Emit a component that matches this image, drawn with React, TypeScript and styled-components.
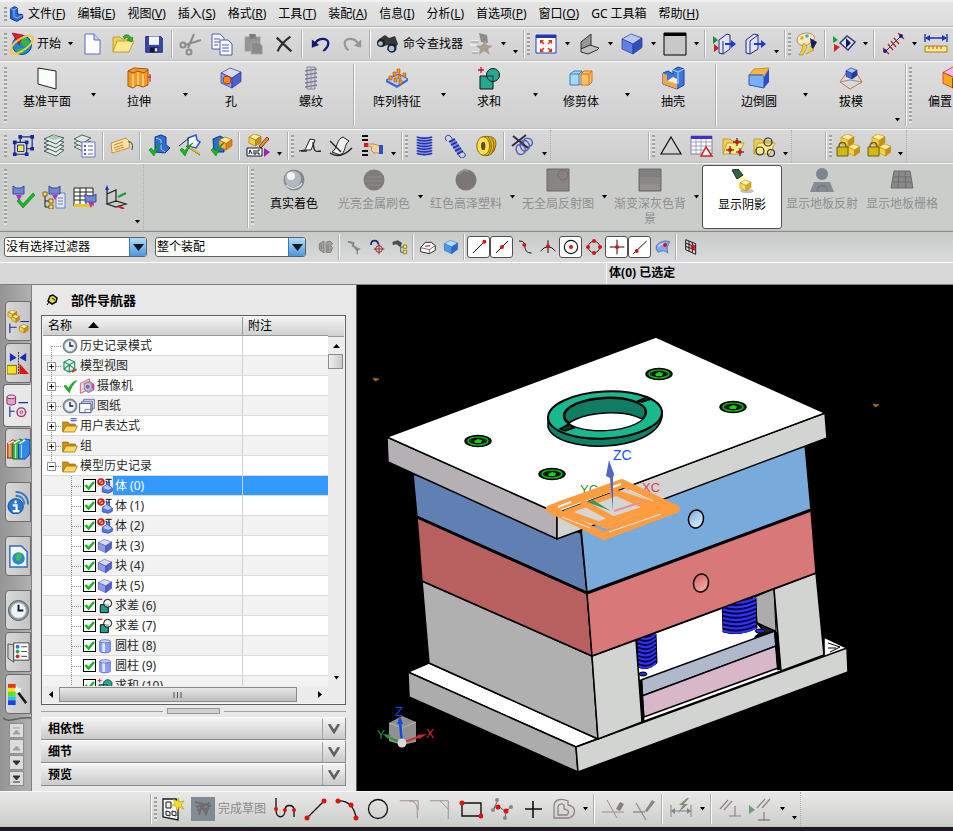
import React, { ReactNode } from "react";
import styled, { createGlobalStyle, css } from "styled-components";

const Global = createGlobalStyle`
  * { box-sizing: border-box; }
  body { margin: 0; }
  body, button, input, select, table {
    font-family: "Noto Sans", "Noto Sans CJK SC", sans-serif;
    font-size: 12px;
    line-height: 16px;
    color: #000;
  }
  button { border: 0; padding: 0; background: none; }
  svg { display: block; flex: none; }
`;

/* ---------- icon building blocks ---------- */

const BLUE: [string, string, string] = ["#c8d4ff", "#4f78e8", "#2340b8"];
const GOLD: [string, string, string] = ["#fff0a0", "#f8d040", "#c89010"];
const ORANGE: [string, string, string] = ["#ffd890", "#f8a030", "#c86808"];
const LILAC: [string, string, string] = ["#d8dcff", "#9098f8", "#5060d0"];

function Cube({ x = 2, y = 2, s = 20, c = BLUE, line = "#2a3a90" }: {
  x?: number; y?: number; s?: number; c?: [string, string, string]; line?: string;
}) {
  const q = s / 4;
  return (
    <g stroke={line} strokeWidth="0.7" strokeLinejoin="round">
      <path d={`M${x} ${y + q}L${x + s * 0.45} ${y}L${x + s} ${y + q * 0.8}L${x + s * 0.55} ${y + q * 2}Z`} fill={c[0]} />
      <path d={`M${x} ${y + q}L${x + s * 0.55} ${y + q * 2}V${y + s}L${x} ${y + s - q}Z`} fill={c[1]} />
      <path d={`M${x + s * 0.55} ${y + q * 2}L${x + s} ${y + q * 0.8}V${y + s - q * 1.3}L${x + s * 0.55} ${y + s}Z`} fill={c[2]} />
    </g>
  );
}

const Tick = ({ c = "#18b820" }: { c?: string }) => (
  <path d="M2 16l2-2 3 3C9 13 12 10 15 9C11 13 9 17 7 22Z" fill={c} stroke="#0a7a10" strokeWidth="0.6" />
);

const Dot = ({ x, y, r = 2 }: { x: number; y: number; r?: number }) => <circle cx={x} cy={y} r={r} fill="#e01010" stroke="none" />;

const Folder = () => (
  <g stroke="#b89020" strokeWidth="0.8">
    <path d="M2 20V5h7l2 2h9v5" fill="#f0d050" />
    <path d="M2 20l4-11h17l-5 11Z" fill="#fbe98c" />
  </g>
);

const clockFace = (
  <>
    <circle cx="12" cy="12" r="10.5" fill="#8a929a" stroke="#59626a" />
    <circle cx="12" cy="12" r="8" fill="#eef4fa" stroke="#b8c4d0" />
    <path d="M12 6v6h5" fill="none" stroke="#101830" strokeWidth="2" />
  </>
);

const folderOpen = (
  <g stroke="#8a6008">
    <path d="M1 21V6h8l2 3h9v4" fill="#d09018" />
    <path d="M1 21l5-9h17l-4 9Z" fill="#ffd860" />
  </g>
);

const icons: Record<string, ReactNode> = {
  logo: <><path d="M4 4l6-3 4 2v9l8 1v5l-9 5-9-4Z" fill="#2868d8" stroke="#08308c" strokeWidth="1.5" /><path d="M4 4l5 2v10l5 2 8-4M9 6l5-3" fill="none" stroke="#a8c8ff" strokeWidth="1.2" /></>,
  globe: (
    <>
      <circle cx="12" cy="13" r="9.5" fill="#1c86d8" stroke="#0a4a90" />
      <path d="M9 8l6-3 5 5-5 5-3-2zM6 17l7-1 1 5-4 1z" fill="#34b440" />
      <path d="M2 1l11 2-4 10Z" fill="#d82038" stroke="#8a0818" strokeWidth="0.6" />
      <path d="M2 20C-1 15 5 9 14 5s10 1 8 5-9 9-14 11-9 0-7-3" fill="none" stroke="#f4c838" strokeWidth="2" />
    </>
  ),
  file: (
    <>
      <path d="M5 2h9l6 6v14H5Z" fill="#fff" stroke="#5868d0" />
      <path d="M14 2v6h6" fill="#c8d0f8" stroke="#5868d0" />
    </>
  ),
  open: <><Folder /><path d="M12 5c3-4 7-2 8 1l2-1-1 5-5-2 2-1c-1-2-3-2-5 0" fill="#38b030" stroke="#187010" strokeWidth="0.6" /></>,
  save: (
    <>
      <path d="M2 3h18l2 2v17H2Z" fill="#3848b0" stroke="#182060" />
      <path d="M6 3h12v10H6Z" fill="#f4f8ff" /><path d="M7 16h10v6H7Z" fill="#101830" /><path d="M13 17h3v4h-3Z" fill="#d8e8f8" />
    </>
  ),
  cut: (
    <g fill="none" stroke="#8c8c8c" strokeWidth="2">
      <path d="M15 2L9 16M22 8L6 13" /><circle cx="4" cy="13" r="2.5" /><circle cx="10" cy="20" r="2.5" />
    </g>
  ),
  copy: (
    <g fill="#fff" stroke="#4858c0">
      <path d="M2 2h8l4 4v11H2Z" /><path d="M4 7h6M4 10h6M4 13h4" /><path d="M10 8h8l4 4v11H10Z" /><path d="M12 13h7M12 16h7M12 19h7" />
    </g>
  ),
  paste: <><path d="M3 4h17v16H3Z" fill="#949494" /><path d="M8 1h7v5H8Z" fill="#7c7c7c" /><path d="M10 10h8l4 4v9H10Z" fill="#8a8a8a" stroke="#a8a8a8" /></>,
  del: <path d="M4 5L20 20M19 4Q9 11 5 20" fill="none" stroke="#303030" strokeWidth="2.4" />,
  undo: <><path d="M5 13C8 4 20 5 20 11s-5 7-5 9" fill="none" stroke="#101878" strokeWidth="2.4" /><path d="M2 7v9l8-3Z" fill="#101878" /></>,
  redo: <><path d="M19 13C16 4 4 5 4 11s4 7 4 8" fill="none" stroke="#989898" strokeWidth="2.4" /><path d="M22 7v9l-8-2Z" fill="#989898" /></>,
  binoc: (
    <>
      <path d="M3 7l6-4 4 3 6-2 3 8-6 9-5-3 1-5-7 2Z" fill="#383838" />
      <circle cx="5" cy="11" r="4" fill="#202020" /><circle cx="4.5" cy="11.5" r="2.3" fill="#a8c0f8" />
      <circle cx="16" cy="16" r="4.5" fill="#202020" /><circle cx="15.5" cy="16.5" r="2.8" fill="#a8c0f8" />
    </>
  ),
  star: <><path d="M9 1l8 2 1 8-7-1Z" fill="#8c8c8c" /><path d="M15 8l2 5 6 1-5 3 2 6-6-4-5 4 1-6-4-3 6-1Z" fill="#a8a08c" /><path d="M1 9h8M0 13h6M2 20h6" stroke="#fff" /><path d="M1 10h8M2 21h6" stroke="#909090" /></>,
  fit: (
    <>
      <path d="M2 3h20v18H2Z" fill="#fff" stroke="#2038b8" /><path d="M2 3h20v3H2Z" fill="#2038b8" />
      <path d="M7 9l3 3M17 9l-3 3M7 19l3-3M17 19l-3-3" stroke="#e03018" strokeWidth="1.5" />
      <path d="M6 8h4l-4 4zM18 8h-4l4 4zM6 20h4l-4-4zM18 20h-4l4-4z" fill="#e03018" />
    </>
  ),
  laptop: <><path d="M4 10l10-8v11L4 17Z" fill="#989898" stroke="#303030" /><path d="M4 17l9-4 9 3-2 2-9 4-7-2Z" fill="#c0c0c0" stroke="#303030" /></>,
  cube: <Cube c={["#b8c8ff", "#6080e8", "#3050c0"]} />,
  blank: <><path d="M1 1h22v22H1Z" fill="#c8c8c8" stroke="#000" /><path d="M1 1h22v3H1Z" fill="#000" /></>,
  clipIn: <><path d="M7 8l8-6 3 1v14l-7 5-4-1Z" fill="#e0e4ff" stroke="#202878" /><path d="M11 9v13" stroke="#202878" /><path d="M1 4v8l5-4Z" fill="#189030" /><path d="M2 12v8l5-4Z" fill="#d01818" /><path d="M13 11h6v-3l5 4-5 4v-3h-6Z" fill="#1838d8" /></>,
  clipOut: <><path d="M3 8l8-6 4 1v14l-8 5-4-1Z" fill="#e0e4ff" stroke="#202878" /><path d="M7 9v13M7 9l8-6" stroke="#202878" /><path d="M11 11h7v-3l5 4-5 4v-3h-7Z" fill="#1838d8" /></>,
  palette: (
    <>
      <path d="M2 8C2 0 16-1 19 4c2 5-4 5-5 8-3 3-12 2-12-4Z" fill="#f8e8c0" stroke="#b09050" />
      <circle cx="7" cy="6" r="1.8" fill="#d8b020" /><circle cx="12" cy="4" r="1.8" fill="#30b0e8" />
      <path d="M15 6l7 4-5 9Z" fill="#182058" /><path d="M9 11l3 4-4 8H4l3-5 1-6Z M15 14l4 4-8 4" fill="#f0d040" stroke="#a08010" strokeWidth="0.6" />
    </>
  ),
  eye: <><path d="M1 4v7l5-3Z" fill="#18a038" /><path d="M2 12v8l6-5Z" fill="#d82020" /><path d="M8 11l7-7 8 6-7 8Z" fill="#dfe6ff" stroke="#303878" strokeWidth="1.5" /><path d="M14 6l5 5-5 5Z" fill="#101860" /></>,
  measure: <><path d="M5 19L20 4" stroke="#2030a8" /><path d="M2 16l6 6M17 1l6 6M7 12l5 6M10 9l5 6M13 6l5 6" stroke="#c02020" strokeWidth="1.3" /><circle cx="4" cy="19" r="2" fill="#182080" /><circle cx="20" cy="4" r="2" fill="#182080" /></>,
  ruler: <><path d="M1 2v8M23 2v8M2 6h20" stroke="#1830c0" strokeWidth="1.4" /><path d="M1 6l5-3v6zM23 6l-5-3v6z" fill="#1830c0" /><path d="M1 14h22v6H1Z" fill="#fbe890" stroke="#a88010" /><path d="M5 14v3M9 14v3M13 14v3M17 14v3" stroke="#c05020" /></>,

  plane: <path d="M3 2l18 3v18L3 18Z" fill="#f8fff8" stroke="#202020" />,
  extrude: <><path d="M1 5l6-3 14 1v16l-5 2-6-2-4 3-5-2Z" fill="#f89828" stroke="#a85008" /><path d="M1 5l5 2 5-2 6 2 4-3" fill="none" stroke="#a85008" /><path d="M6 8v13M11 6v13M16 8v12" stroke="#ffe080" strokeWidth="1.5" /><path d="M23 8v8M21 11h3" stroke="#c01010" /></>,
  hole: <><Cube c={LILAC} /><circle cx="8" cy="14" r="4" fill="#f88820" stroke="#c03010" /></>,
  thread: <><path d="M8 1h8v22H8Z" fill="#c8d4e8" stroke="#808898" /><path d="M6 5l12-2M6 9l12-2M6 13l12-2M6 17l12-2M6 21l12-2" stroke="#788098" strokeWidth="1.5" /><path d="M12 1v22" stroke="#d08080" /></>,
  pattern: <><path d="M1 14l13-6 9 5-11 7Z" fill="#b8d0ff" stroke="#3058c8" /><path d="M1 14v2l11 6 11-7v-2l-11 7Z" fill="#3868d8" />{[[4, 10], [8, 6], [12, 3], [9, 12], [13, 9], [18, 7], [14, 14]].map(([a, b]) => <path key={`${a}-${b}`} d={`M${a} ${b}h3v4h-3Z`} fill="#f89020" stroke="#b05808" strokeWidth="0.6" />)}</>,
  unite: <><path d="M3 10h13v13H3Z" fill="#28a890" stroke="#101010" /><circle cx="16" cy="9" r="6.5" fill="#28a890" stroke="#101010" /><path d="M9 10h7v6" fill="none" stroke="#101010" strokeWidth="0.7" /><path d="M1 4h6M4 1v6" stroke="#d01010" strokeWidth="1.3" /></>,
  trim: <><path d="M1 8l4-3h8v12l-3 2H1Z" fill="#a8d8f8" stroke="#3080c0" /><path d="M1 8h9v11M10 8l3-3" fill="none" stroke="#3080c0" /><path d="M12 8l3-3h8v11l-3 3h-8Z" fill="#ffc068" stroke="#d87010" /><path d="M12 8h8v11M20 8l3-3" fill="none" stroke="#d87010" /></>,
  shell: <><path d="M12 4l5-3 6 2v16l-7 4-14-5V7l5-2 5 3Z" fill="#3a78e0" stroke="#1840a0" /><path d="M2 7l4 2v6l10 3v5l-14-5Z" fill="#f8a838" /><path d="M6 15l6-4 4 2v5Z" fill="#fff0c8" /><path d="M12 4l5 2 6-3M17 6v12" fill="none" stroke="#c0d8ff" /></>,
  blend: <><path d="M2 9l5-6 15-1-4 7Z" fill="#f8b840" stroke="#c07010" strokeWidth="0.7" /><path d="M2 9h12c2 0 3 1 3 3v10L2 19Z" fill="#78b0f8" stroke="#2858c0" /><path d="M17 11l5-8v13l-5 6Z" fill="#2850c8" /></>,
  draft: <><path d="M10 3L1 16l10 7 12-7-8-13" fill="none" stroke="#e06838" /><path d="M1 16l10-2 12 2" stroke="#909090" fill="none" /><Cube x={7} y={2} s={11} c={["#a8c8ff", "#3868d8", "#1c3ca0"]} /></>,
  offset: <><Cube x={1} y={1} s={22} c={["#f0b8f8", "#f8a820", "#e8c0e8"]} line="#d81818" /><path d="M11 12h12v10H11Z" fill="#fff" stroke="#000" /></>,

  bounds: <><path d="M9 2h13v13H9Z" fill="none" stroke="#182890" strokeWidth="1.3" /><path d="M3 8h13v13H3Z" fill="#d8d8d8" stroke="#182890" strokeWidth="1.3" /><path d="M6 11h7v7H6Z" fill="#f8e850" stroke="#182890" /><path d="M1 6h4v4H1zM14 6h4v4h-4zM1 19h4v4H1zM14 19h4v4h-4zM20 0h4v4h-4zM20 13h4v4h-4zM7 0h4v4H7z" fill="#182890" /></>,
  layers: <>{[15, 11, 7, 3].map((y) => <path key={y} d={`M2 ${y + 2}l9-4 11 3-8 6Z`} fill="#e0ece4" stroke="#485860" />)}<path d="M5 4l7-3 7 3-6 2z" fill="#a8d0b0" /></>,
  layerset: <>{[13, 9, 5].map((y) => <path key={y} d={`M1 ${y}l8-4 9 3-8 5Z`} fill="#d8e8dc" stroke="#586868" />)}<path d="M9 8h13v15H9Z" fill="#fff" stroke="#6870c8" /><path d="M11 11h2v2h-2zM11 15h2v2h-2zM11 19h2v2h-2z" fill="#5060c0" /><path d="M15 12h5M15 16h5M15 20h5" stroke="#5060c0" /></>,
  tag: <><path d="M1 9l15-5 4 4-1 6-17 5Z" fill="#ffe0a0" stroke="#c89040" /><path d="M4 11l9-3M4 14l9-3M5 16l9-3" stroke="#d08838" /><path d="M18 8c5-1 5 4 4 8" fill="none" stroke="#404040" /></>,
  partTick: <><path d="M8 3l6-2 5 2v8l4 3-5 5-10-1Z" fill="#2c6cd8" stroke="#103880" /><path d="M9 4l5 2v9l4 3" fill="none" stroke="#a8c8ff" /><Tick /></>,
  sketchTick: <><path d="M10 4l8-3 1 5 3 2-4 6-8-2Z" fill="#f8fbff" stroke="#2858c8" strokeWidth="1.5" /><path d="M1 12l10-8M8 12l14 9" stroke="#303030" /><path d="M11 13l11 7" stroke="#e8b828" strokeWidth="2" /><Tick /></>,
  asmTick: <><path d="M4 5l7-3 4 2v14H5Z" fill="#2c6cd8" stroke="#103880" /><Cube x={10} y={3} s={13} c={["#ffe8a0", "#f8b040", "#e08010"]} line="#a86808" /><Tick /></>,
  abc: <><Cube x={3} y={0} s={12} c={GOLD} line="#a87808" /><path d="M13 12L21 3l2 2-8 9Z" fill="#e89828" stroke="#803808" /><path d="M1 14h15v8H1Z" fill="#fff" stroke="#101040" /><path d="M3 20l1-4 2 4M8 16v4h2v-4M14 16h-2v4h2" fill="none" stroke="#101010" /><path d="M18 14l6 4-6 5Z" fill="#a020b0" /></>,
  surf1: <><path d="M1 17l6-1 5-11 5 1-4 10H8" fill="#fafafa" stroke="#202020" /><path d="M3 17h6M15 8c1 10 2 10 8 9" fill="none" stroke="#202020" strokeWidth="1.4" /></>,
  surf2: <><path d="M3 18C8 16 8 4 14 3l6 4c-5 3-3 12-9 14Z" fill="#f0f0f0" stroke="#202020" /><path d="M1 7l11 11M1 19c6 4 14 3 22-5" fill="none" stroke="#202020" strokeWidth="1.4" /></>,
  suppress: <><path d="M2 2h6M2 6h6M2 17h6M2 21h6" stroke="#101010" strokeWidth="2" /><path d="M4 9h4v4H4Z" fill="#e01010" /><path d="M8 10h6l6 2v7h-6l-3-3 1-3-4-1Z" fill="#f8d0a0" stroke="#a87040" strokeWidth="0.7" /><path d="M19 11h4v9h-4Z" fill="#3050c0" /></>,
  spring: <><path d="M5 2h15v20H5Z" fill="#8898f0" />{[3, 6, 9, 12, 15, 18, 21].map((y) => <path key={y} d={`M4 ${y - 1}q8 3 17 0`} fill="none" stroke="#2030a0" strokeWidth="1.6" />)}</>,
  tension: <><path d="M4 7a3 3 0 1 1 4-4l2 3M19 18a3 3 0 1 1-2 5l-2-3" fill="none" stroke="#2838a8" /><path d="M6 7l5-3 9 13-5 4Z" fill="#7888e8" /><path d="M6 8l6-3M8 11l6-3M10 14l6-3M12 17l6-3M14 20l6-3" stroke="#2030a0" strokeWidth="1.8" /></>,
  disc: <><path d="M8 2c12-2 17 2 14 12s-11 9-14 8Z" fill="#e8b810" stroke="#806008" /><path d="M14 2c5 5 5 15 0 20M18 3c4 5 3 14-1 18" stroke="#806008" fill="none" /><ellipse cx="9" cy="12" rx="7" ry="10" fill="#fbe048" stroke="#806008" /><ellipse cx="9" cy="12" rx="3" ry="5" fill="#605010" stroke="#fff090" /></>,
  delSpring: <><path d="M6 18c-4-8 6-10 8-4s-6 9-8 4M10 14c-4-8 6-10 8-4s-6 10-8 4M13 11c-3-8 6-8 8-4s-5 9-8 4" fill="none" stroke="#5868c0" strokeWidth="1.5" /><path d="M2 2l15 12M15 1L1 12" stroke="#303040" strokeWidth="2" /></>,
  triangle: <path d="M12 3L22 20H2Z" fill="none" stroke="#101010" strokeWidth="1.2" />,
  tableTri: <><path d="M1 2h21v18H1Z" fill="#fff" stroke="#8080a0" /><path d="M1 2h21v3H1Z" fill="#4030d0" /><path d="M1 8h21M1 12h21M1 16h21M6 5v15M11 5v15M16 5v15" stroke="#a0a0b8" /><path d="M16 13l6 9H11Z" fill="#fff" stroke="#d02020" strokeWidth="1.5" /></>,
  folderPts: <><Folder /><path d="M5 16h8M9 12v8M12 8h8M16 4v8M15 18h8M19 14v8" stroke="#101010" /><Dot x={9} y={16} /><Dot x={16} y={8} /><Dot x={19} y={18} /></>,
  folderCir: <><Folder /><g fill="none" stroke="#303030" strokeWidth="1.2"><circle cx="8" cy="17" r="4" /><circle cx="16" cy="8" r="4" /><circle cx="19" cy="19" r="3.5" /></g></>,
  lockCube: <><Cube x={5} y={0} s={13} c={GOLD} line="#c09818" /><Cube x={12} y={10} s={12} c={GOLD} line="#c09818" /><path d="M1 13h11v9H1Z" fill="#d0b818" stroke="#706008" /><path d="M3 13c0-6 7-6 7 0" fill="none" stroke="#706008" strokeWidth="1.5" /></>,

  filterTick: <><path d="M2 1l3 2h5l3-2v8H2Z" fill="#7088d0" stroke="#3848a0" /><path d="M5 10h6l-3 6Z" fill="#b030c0" /><path d="M8 14l4 5L22 8l2 2-12 13-6-7Z" fill="#18b820" stroke="#087810" strokeWidth="0.6" /></>,
  filterTree: <><path d="M14 8h9v15h-9Z" fill="#e0e8ff" stroke="#7080c0" /><path d="M16 13h5M16 16h5M16 19h5" stroke="#7080c0" /><path d="M7 1l3 2h5l3-2v8H7Z" fill="#7088d0" stroke="#3848a0" /><path d="M10 10h6l-3 5Z" fill="#b030c0" /><path d="M3 10v12h6M3 16h6" fill="none" stroke="#202020" /><path d="M1 7h4v4H1zM7 14h4v4H7zM7 20h4v4H7z" fill="#f8e060" stroke="#806008" /></>,
  filterTable: <><path d="M1 3h19v18H1Z" fill="#fff" stroke="#202020" /><path d="M1 7h19M1 11h19M1 15h19M7 3v18M13 3v18" stroke="#202020" /><path d="M1 19h19v3H1Z" fill="#e8c820" /><path d="M12 9l3 2h5l3-2v8H12Z" fill="#7088d0" stroke="#3848a0" /><path d="M15 17h6l-3 6Z" fill="#b030c0" /></>,
  csys: <><path d="M3 4v15M3 9l9-4v12M3 19l9-3 10 3-10 3Z" fill="none" stroke="#202020" strokeWidth="1.2" /><path d="M1 5l2-5 2 5Z" fill="#1830d0" /><path d="M14 12l8-4" stroke="#18a030" strokeWidth="2" /><path d="M14 21l6 3" stroke="#d02020" strokeWidth="2" /></>,
  sphere: <><circle cx="12" cy="12" r="10.5" fill="#84888f" /><circle cx="11" cy="11" r="8" fill="#b4b8c0" /><circle cx="9" cy="8" r="4" fill="#f0f4f8" /><path d="M4 17c5 5 12 4 16-2" stroke="#d8dce4" fill="none" strokeWidth="1.5" /></>,
  metal: <><circle cx="12" cy="12" r="10.5" fill="#807c7c" /><path d="M4 9h16M3 13h18M6 17h12" stroke="#918a86" /></>,
  plastic: <><circle cx="12" cy="12" r="10.5" fill="#7c7676" /><path d="M4 6l6-4 4 1" stroke="#98908e" fill="none" strokeWidth="2" /></>,
  reflect: <><path d="M1 1h22v22H1Z" fill="#888484" stroke="#686868" /><circle cx="17" cy="7" r="5" fill="#8f8080" stroke="#7c6c6c" /></>,
  gradient: <><path d="M1 1h22v22H1Z" fill="#808080" stroke="#686868" /><path d="M2 9h20v7H2Z" fill="#8b8787" /><path d="M2 16h20v6H2Z" fill="#949090" /></>,
  shadow: <><path d="M6 8l7-3 7 6-3 11-7-2Z" fill="#fffbd0" /><path d="M2 1l6-1 5 6-6 4Z" fill="#386048" stroke="#183020" /><ellipse cx="17" cy="22" rx="7" ry="2" fill="#c0c0c0" /><Cube x={10} y={11} s={11} c={["#fff8b0", "#f8d860", "#d8a820"]} line="#c09820" /></>,
  floorRef: <><circle cx="12" cy="6" r="6" fill="#7c8490" /><path d="M4 14h16l4 10H0Z" fill="#888c92" /><path d="M7 23c0-7 10-7 10 0" fill="none" stroke="#747c88" strokeWidth="2" /></>,
  floorGrid: <path d="M4 3h16l3 17H1ZM3 9h18M2 14h20M9 3L8 20M15 3l1 17" fill="#8a8a8a" stroke="#6c6c6c" />,

  chainG: <g fill="#a0a09c" stroke="#80807c" strokeWidth="1.5"><path d="M9 3L2 7v9l7 5ZM12 12V5l6-2 4 4-3 3 3 3-3 7h-7Z" /><path d="M5 8v7M15 8v10" /></g>,
  magG: <><path d="M3 4l8 2-1 4 8 5" stroke="#789088" strokeWidth="3" fill="none" /><path d="M12 14h10l-4 4v5h-2v-5Z" fill="#8a8a80" /></>,
  target: <><path d="M3 9C3 0 13 1 14 8" fill="none" stroke="#182868" strokeWidth="2.5" /><circle cx="15" cy="15" r="5" fill="none" stroke="#d01818" strokeWidth="1.5" /><path d="M15 7v16M7 15h16" stroke="#301010" /></>,
  binocTree: <><path d="M1 4l8-2 6 4-3 6-5-4-6 1Z" fill="#485048" /><path d="M13 6v14h4M13 12h4" stroke="#303030" fill="none" /><path d="M17 9h5v5h-5zM17 17h5v5h-5z" fill="#f8e060" stroke="#706008" /></>,
  smallBox: <><path d="M1 13l7-8h9l6 5v7l-9 5-13-3Z" fill="#fafafa" stroke="#303030" strokeWidth="1.500" /><path d="M1 13l13 3 9-6M14 16v6" fill="none" stroke="#303030" /><path d="M8 11l7-1" stroke="#c03030" strokeWidth="2" /></>,
  tealCube: <Cube c={["#b0e0ff", "#4898f0", "#2868d8"]} line="#2858a8" />,
  lineEnd: <><path d="M3 21L20 4" stroke="#101010" strokeWidth="1.5" /><Dot x={20} y={4} r={3} /></>,
  lineMid: <><path d="M3 21L21 3" stroke="#101010" strokeWidth="1.5" /><Dot x={12} y={12} r={3} /></>,
  curvePt: <><path d="M3 3c10 0 8 6 9 10s2 8 10 8" fill="none" stroke="#101010" strokeWidth="1.5" /><Dot x={11} y={9} r={3} /></>,
  cross: <><path d="M1 18q11-13 22 0M12 2v19" fill="none" stroke="#101010" strokeWidth="1.5" /><Dot x={12} y={11} r={3} /></>,
  circCen: <><circle cx="12" cy="12" r="10" fill="none" stroke="#101010" strokeWidth="1.7" /><Dot x={12} y={12} r={3} /></>,
  circQuad: <><circle cx="12" cy="12" r="8.5" fill="none" stroke="#303030" strokeWidth="1.5" /><Dot x={12} y={3} r={3} /><Dot x={12} y={21} r={3} /><Dot x={3} y={12} r={3} /><Dot x={21} y={12} r={3} /></>,
  plusPt: <><path d="M12 1v22M1 12h22" stroke="#101010" strokeWidth="1.5" /><Dot x={12} y={12} r={3} /></>,
  onCurve: <><path d="M2 22L22 3" fill="none" stroke="#101010" strokeWidth="1.5" /><Dot x={7} y={18} r={3} /></>,
  onFace: <><path d="M2 10Q10 0 22 4q-6 8-3 17-6-6-14-1Q0 16 2 10Z" fill="#80a8f0" stroke="#3858b0" /><path d="M5 11q6-5 11-4" fill="none" stroke="#d8e8ff" strokeWidth="2" /><Dot x={15} y={9} r={3} /></>,
  gridPt: <><path d="M4 1l15 6v16L4 16ZM4 6l15 6M4 11l15 6M9 3v16M14 5v16" fill="none" stroke="#202020" strokeWidth="1.5" /><Dot x={15} y={12} r={3.5} /></>,

  sketchNew: <><path d="M2 2h13l2 3v18L2 20Z" fill="#fff" stroke="#181818" strokeWidth="1.3" /><path d="M5 5h5v6H5zM5 14l4 1v4l-4-1zM11 14l4 1v4l-4-1z" fill="#f0f0f0" stroke="#181818" /><path d="M17 1l1 4 5-1-3 4 3 4-5-2-2 4-1-5-5 0 4-3-2-4 4 2Z" fill="#f8e020" stroke="#a08810" strokeWidth="0.5" /></>,
  finish: <><path d="M0 0h24v24H0Z" fill="#808c94" /><path d="M4 5l16 4M5 10l14-4M6 13l12-2M8 18l3-11 4 10 3-9" stroke="#706c6c" strokeWidth="2" fill="none" /></>,
  profile: <><path d="M3 1v12c0 9 9 9 9 0 0-6 9-6 9 0v7" fill="none" stroke="#101010" strokeWidth="1.3" /><Dot x={3} y={12} /><Dot x={12} y={13} /><Dot x={21} y={13} /></>,
  line: <><path d="M3 21L20 4" stroke="#101010" strokeWidth="1.3" /><Dot x={3} y={21} r={2.5} /><Dot x={20} y={4} r={2.5} /></>,
  arc: <><path d="M3 4C13 3 19 10 21 20" fill="none" stroke="#101010" strokeWidth="1.3" /><Dot x={3} y={4} r={2.5} /><Dot x={16} y={8} r={2.5} /><Dot x={21} y={21} r={2.5} /></>,
  circle: <circle cx="12" cy="12" r="9.5" fill="none" stroke="#101010" strokeWidth="1.3" />,
  fillet: <path d="M2 3h10c6 0 9 4 9 10v9M12 3h10v10" fill="none" stroke="#988888" />,
  chamfer: <path d="M1 3h11l9 9v11M12 3h9v9" fill="none" stroke="#988888" />,
  rect: <><path d="M3 6h19v13H3Z" fill="none" stroke="#101010" strokeWidth="1.4" /><Dot x={3} y={6} r={2.5} /><Dot x={22} y={19} r={2.5} /></>,
  spline: <><path d="M3 13C7 6 9 10 12 12s5 4 8-2M8 3L3 13M15 22l1-8" fill="none" stroke="#606060" /><circle cx="7" cy="3" r="2" fill="#888" /><circle cx="3" cy="13" r="2" fill="#888" /><circle cx="21" cy="10" r="2" fill="#888" /><circle cx="15" cy="21" r="2" fill="#888" /><Dot x={8} y={10} r={2.5} /><Dot x={16} y={14} r={2.5} /></>,
  plus: <path d="M12 4v17M4 12h17" stroke="#101010" strokeWidth="1.6" />,
  contour: <path d="M2 21V9c0-7 8-8 14-5v4c9 2 8 10 1 13ZM6 18v-8c0-3 4-4 6-2v4c6 1 5 4 3 6Z" fill="none" stroke="#8c8484" strokeWidth="1.3" />,
  trimQ: <><path d="M1 15h22M6 3l10 18" stroke="#909090" fill="none" /><path d="M15 12l4-7 4 2-4 7Z" fill="#888080" /></>,
  extQ: <><path d="M1 15h12M4 6l10 17M14 14l2-4" stroke="#909090" fill="none" strokeWidth="1.3" /><path d="M13 14l7-11 3 2-8 10Z" fill="#8c847c" /></>,
  dimQ: <><path d="M2 8v12M22 8v12M3 14h18" stroke="#788880" fill="none" /><path d="M2 14l4-3v6zM22 14l-4-3v6z" fill="#788880" /><path d="M18 1l-8 7h4l-5 8 10-9h-4l5-6Z" fill="#848c7c" /></>,
  constr: <path d="M2 12L10 3M6 13l8-9M17 9v10M11 19h12" stroke="#8c848c" fill="none" strokeWidth="1.2" />,
  constrGo: <><path d="M0 8v9l6-4Z" fill="#68a078" /><path d="M8 11l8-9M13 11l8-9M15 15v9M9 23h12" stroke="#8c848c" fill="none" strokeWidth="1.3" /></>,

  clock: clockFace,
  views: <><path d="M3 6l8-4 8 4v11l-8 4-8-4ZM3 6l8 4 8-4M11 10v11M3 17l8-7 8 7" fill="none" stroke="#18985c" strokeWidth="1.8" /><path d="M15 21l7-4" stroke="#e03020" strokeWidth="2.5" /></>,
  check: <path d="M3 12l3-1 4 5C13 9 17 5 22 4 16 10 13 15 11 22Z" fill="#18c020" stroke="#088010" />,
  camera: <><path d="M2 8l14-7v16L2 23Z" fill="#f8d0e0" stroke="#d02040" /><path d="M8 8l8-3 6 4v9l-8 4-6-5Z" fill="#b0a8c8" stroke="#605878" /><circle cx="13" cy="13" r="4" fill="#6878a8" stroke="#fff" /><path d="M19 8l4 2v8l-4-3Z" fill="#e040a0" /></>,
  sheet: <><path d="M7 2h16v14H7Z" fill="#d8dcf0" stroke="#404c88" /><path d="M4 5h16v14H4Z" fill="#e4e8f8" stroke="#404c88" /><path d="M1 8h17v14H1Z" fill="#fff" stroke="#404c88" strokeWidth="1.5" /><path d="M9 22v-5h9" fill="none" stroke="#404c88" /></>,
  folderEq: <>{folderOpen}<path d="M13 1h9M13 4h9" stroke="#2838b0" strokeWidth="1.6" /></>,
  folder: folderOpen,
  body: <><path d="M8 14l6-4V6h5v6l4 3v5l-6 3-9-2Z" fill="#5078e0" stroke="#2038a0" /><path d="M14 10l-5 5 8 3 5-3" fill="#b8c8ff" /><path d="M13 2h9M18 2v5M13 5h2" stroke="#101010" strokeWidth="1.5" /><circle cx="6" cy="6" r="4.500" fill="#f8c8c0" stroke="#c81818" strokeWidth="2.4" /><path d="M3 9l6-6" stroke="#c81818" strokeWidth="2" /></>,
  block: <Cube c={LILAC} />,
  subtract: <><path d="M5 10h12v12H5Z" fill="#20a088" stroke="#101010" strokeWidth="1.5" /><circle cx="16" cy="8" r="6" fill="#f0f0f0" fillOpacity="0.7" stroke="#101010" strokeWidth="1.5" /><path d="M1 2h7" stroke="#d01010" strokeWidth="2" /></>,
  cylinder: <><path d="M4 5v15c2 3 14 3 16 0V5Z" fill="#88a0f8" stroke="#4050b8" /><path d="M8 6v15h4V6Z" fill="#e0e8ff" /><ellipse cx="12" cy="5" rx="8" ry="2.5" fill="#c8d4ff" stroke="#4050b8" /></>,

  tabAsm: <><Cube x={1} y={0} s={9} c={GOLD} line="#b08010" /><Cube x={5} y={5} s={8} c={GOLD} line="#b08010" /><path d="M3 14v10M3 18h7M14 12h9" stroke="#1830a0" strokeWidth="1.2" /><Cube x={13} y={15} s={9} c={GOLD} line="#b08010" /></>,
  tabCon: <><path d="M3 1v9l7-4ZM20 1v9l-7-4Z" fill="#1828c0" /><path d="M12 0v24" stroke="#303030" strokeDasharray="2 1" /><path d="M0 14h10v9H0Z" fill="#f8e020" stroke="#806808" /><path d="M13 12l10 11H13Z" fill="#d81818" /></>,
  tabPart: <><path d="M1 3v7c1 2 8 2 9 0V3Z" fill="#e8a0c8" stroke="#803060" /><ellipse cx="5.5" cy="3" rx="4.5" ry="2" fill="#f8d0e8" stroke="#803060" /><path d="M13 9h10M4 13v11M4 18h5" stroke="#1830a0" strokeWidth="1.2" /><circle cx="16" cy="19" r="4.5" fill="none" stroke="#a03070" strokeWidth="1.5" /><circle cx="16" cy="19" r="1.5" fill="none" stroke="#a03070" /></>,
  tabLib: <><path d="M0 7l6-4 3 1v14l-3 4H0Z" fill="#e87028" stroke="#803008" /><path d="M6 7l7-5 3 1v16l-4 4H6Z" fill="#38b848" stroke="#106818" /><path d="M12 7l7-5 5 1v15l-5 5h-7Z" fill="#3088e8" stroke="#084890" /><path d="M1 7l6-3M7 7l6-4M13 7l6-4" stroke="#fff" strokeWidth="1.500" /><path d="M15 8v14M3 8v13M9 8v14" stroke="#c8e8ff" /></>,
  tabInfo: <><circle cx="9" cy="16" r="8" fill="#2478d8" stroke="#0a4898" /><path d="M9 10v3M6 15h4v6M6 21h7" stroke="#fff" strokeWidth="2.2" fill="none" /><path d="M9 5c6 0 9 4 9 9M9 1c9 0 13 6 13 13" fill="none" stroke="#3878c0" strokeWidth="2" /></>,
  tabWeb: <><path d="M3 1h12l6 6v16H3Z" fill="#f4f8ff" stroke="#2868c8" strokeWidth="1.5" /><circle cx="12" cy="14" r="6.5" fill="#2888d8" /><path d="M8 12l5-4 3 3-3 6-3-1Z" fill="#38c050" /></>,
  tabRole: <><path d="M1 3l6 1v18l-6-4Z" fill="#d0d0d0" stroke="#505050" /><path d="M7 2h16v18H7Z" fill="#fff" stroke="#404040" /><circle cx="11" cy="6" r="2" fill="#2870e8" /><circle cx="11" cy="11" r="2" fill="#20a838" /><circle cx="11" cy="16" r="2" fill="#e02020" /><path d="M15 6h6M15 11h6M15 16h6" stroke="#404040" /></>,
  tabVis: <><path d="M1 1h8v5H1Z" fill="#f03018" /><path d="M1 5h8v4H1Z" fill="#f8e020" /><path d="M1 9h8v5H1Z" fill="#60e020" /><path d="M1 14h8v4H1Z" fill="#20c8e0" /><path d="M1 18h8v5H1Z" fill="#2040e0" /><path d="M12 8l9 12-2 2-9-12Z" fill="#181818" /><path d="M10 3l2 3 3-1-1 4-4 2-2-4Z" fill="#fff" /></>,
};

const Icon = ({ n, size = 24 }: { n: string; size?: number }) => (
  <svg width={size} height={size} viewBox="0 0 24 24" aria-hidden="true">{icons[n]}</svg>
);

const Caret = () => (
  <svg width="7" height="4" viewBox="0 0 7 4" aria-hidden="true"><path d="M1 0h5L3.5 3.5Z" fill="#000" /></svg>
);

/* ---------- toolbars ---------- */

const Page = styled.div`
  display: flex;
  flex-direction: column;
  height: 100vh;
  overflow: hidden;
  background: #d4d4d4;
`;

const MenuBar = styled.nav`
  display: flex;
  align-items: center;
  gap: 12px;
  flex: none;
  height: 27px;
  padding-left: 4px;
  background: linear-gradient(#e4e4e4, #dcdcde);
  border-top: 2px solid #f2f2f2;
  border-bottom: 1px solid #b4b4b4;
  white-space: nowrap;
`;

const Brand = styled.div`
  display: flex;
  align-items: center;
  align-self: stretch;
  gap: 1px;
  margin-right: -8px;
`;

const Bar = styled.div<{ $tall?: boolean; $tone?: string }>`
  display: flex;
  flex: none;
  height: ${(p) => (p.$tall ? 68 : 34)}px;
  padding-left: 4px;
  background: ${(p) => p.$tone ?? "linear-gradient(#dcdcdc, #d0d0d2)"};
  border-top: 1px solid #f8f8f8;
  border-bottom: 1px solid #c0c0c0;
  overflow: hidden;
`;

const Grip = styled.span`
  flex: none;
  align-self: stretch;
  width: 3px;
  margin: 5px 0;
  background: repeating-linear-gradient(#a0a0a0 0 2px, #e4e4e4 2px 4px);
`;

const Sep = styled.span`
  flex: none;
  width: 2px;
  margin: 2px;
  border-left: 1px solid #b0b0b0;
  border-right: 1px solid #fafafa;
`;

const Room = styled.span<{ $w: number }>`
  flex: none;
  width: ${(p) => p.$w}px;
  border-left: 1px dotted #b8a8b8;
`;

const IconButton = styled.button`
  display: flex;
  flex: none;
  align-items: center;
  justify-content: center;
  width: 31px;
`;

const TextButton = styled.button<{ $dim?: boolean }>`
  display: flex;
  flex: none;
  align-items: center;
  gap: 3px;
  padding: 0 3px;
  white-space: nowrap;
  color: ${(p) => (p.$dim ? "#8c8c8c" : "#000")};
`;

const DropButton = styled.button<{ $low?: boolean }>`
  display: flex;
  flex: none;
  justify-content: center;
  align-items: ${(p) => (p.$low ? "flex-end" : "center")};
  width: 12px;
  padding-bottom: ${(p) => (p.$low ? 6 : 0)}px;
`;

const BigButton = styled.button<{ $on?: boolean; $dim?: boolean }>`
  display: flex;
  flex: none;
  flex-direction: column;
  align-items: center;
  gap: 4px;
  width: 80px;
  padding: 4px 3px 0;
  color: ${(p) => (p.$dim ? "#8f8f8f" : "#000")};
  line-height: 15px;
  ${(p) => p.$on && css`
    margin: 1px 0;
    padding: 3px 2px 0;
    background: #fff;
    border: 1px solid #505050;
    border-radius: 3px;
  `}
`;

const CutButton = styled(BigButton)`
  width: 44px;
  align-items: flex-start;
  padding-left: 16px;
  white-space: nowrap;
  svg { margin-left: 14px; }
`;

const Tool = ({ n, t, size = 24 }: { n: string; t: string; size?: number }) => (
  <IconButton aria-label={t} title={t}><Icon n={n} size={size} /></IconButton>
);
const Drop = () => <DropButton aria-label="下拉"><Caret /></DropButton>;
const More = () => <DropButton $low aria-label="工具栏选项"><Caret /></DropButton>;
const Big = ({ n, t, on, dim }: { n: string; t: string; on?: boolean; dim?: boolean }) => (
  <BigButton $on={on} $dim={dim}><Icon n={n} />{t}</BigButton>
);

const menus: [string, string][] = [
  ["文件", "F"], ["编辑", "E"], ["视图", "V"], ["插入", "S"], ["格式", "R"], ["工具", "T"], ["装配", "A"],
  ["信息", "I"], ["分析", "L"], ["首选项", "P"], ["窗口", "O"], ["GC 工具箱", ""], ["帮助", "H"],
];

/* ---------- selection bar ---------- */

const SelectionBar = styled.div`
  display: flex;
  flex: none;
  align-items: center;
  height: 31px;
  padding-left: 4px;
  background: linear-gradient(#c8cac8, #dadadc);
  border-top: 1px solid #8c8c8c;
`;

const SelectBox = styled.div<{ $w: number }>`
  display: flex;
  flex: none;
  width: ${(p) => p.$w}px;
  height: 20px;
  margin-right: 8px;
  background: #fff;
  border: 1px solid #606060;
  border-radius: 3px;
  overflow: hidden;
  select {
    flex: 1;
    min-width: 0;
    appearance: none;
    border: 0;
    padding: 0 1px;
    background: transparent;
  }
`;

const SelectArrow = styled.span`
  display: flex;
  align-items: center;
  justify-content: center;
  width: 17px;
  background: linear-gradient(#b4dcfa, #4a98dc);
  border-left: 1px solid #3878b8;
`;

const SnapButton = styled.button<{ $on?: boolean }>`
  display: flex;
  flex: none;
  align-items: center;
  justify-content: center;
  width: 23px;
  height: 22px;
  border-radius: 3px;
  border: 1px solid ${(p) => (p.$on ? "#505050" : "transparent")};
  background: ${(p) => (p.$on ? "#fff" : "none")};
`;

const ShortSep = styled(Sep)`
  height: 26px;
  margin: 0 2px 0 1px;
`;

const Choice = ({ w, t, label }: { w: number; t: string; label: string }) => (
  <SelectBox $w={w}>
    <select aria-label={label}><option>{t}</option></select>
    <SelectArrow>
      <svg width="11" height="7" viewBox="0 0 11 7" aria-hidden="true"><path d="M0 0h11L5.5 7Z" fill="#101820" /></svg>
    </SelectArrow>
  </SelectBox>
);
const Snap = ({ n, t, on }: { n: string; t: string; on?: boolean }) => (
  <SnapButton $on={on} aria-label={t} title={t}><Icon n={n} size={16} /></SnapButton>
);

const StatusLine = styled.div`
  display: flex;
  flex: none;
  height: 23px;
  background: #d8d8d8;
  border-top: 1px solid #fff;
  border-bottom: 1px solid #808080;
`;
const Prompt = styled.div`flex: 608 1 0;`;
const Status = styled.div`
  flex: 345 1 0;
  padding-left: 2px;
  border-left: 1px solid #f8f8f8;
  font-weight: bold;
  line-height: 20px;
`;

/* ---------- workspace ---------- */

const Workspace = styled.div`
  display: flex;
  flex: 1;
  min-height: 0;
  background: #000;
`;

const Rail = styled.div`
  display: flex;
  flex: none;
  flex-direction: column;
  align-items: flex-end;
  width: 32px;
  padding-top: 16px;
  background: linear-gradient(90deg, #949494, #b0b0b0);
  border-right: 1px solid #808080;
  overflow: hidden;
`;

const RailTab = styled.button<{ $on?: boolean; $gap?: number }>`
  display: flex;
  flex: none;
  align-items: center;
  justify-content: center;
  width: ${(p) => (p.$on ? 28 : 26)}px;
  height: ${(p) => (p.$on ? 43 : 40)}px;
  margin-top: ${(p) => p.$gap ?? 0}px;
  background: ${(p) => (p.$on ? "#e8e8e8" : "linear-gradient(90deg, #d8d8d8, #c4c4c4)")};
  border: 1px solid #6c6c6c;
  border-right-color: ${(p) => (p.$on ? "#e8e8e8" : "#6c6c6c")};
  border-radius: 4px 0 0 4px;
`;

const Wave = styled.svg`margin: 1px 0 0;`;

const RailStep = styled.button`
  display: flex;
  flex: none;
  align-items: center;
  justify-content: center;
  width: 15px;
  height: 15px;
  margin: 0 7px 1px 0;
  background: #dcdcdc;
  border: 1px solid #8c8c8c;
`;

const Navigator = styled.section`
  display: flex;
  flex: none;
  flex-direction: column;
  width: 325px;
  padding: 0 10px 5px 9px;
  background: #e8e8e8;
  border-right: 1px solid #606060;
`;

const PanelTitle = styled.h2`
  display: flex;
  align-items: center;
  gap: 12px;
  height: 30px;
  margin: 0;
  padding-left: 5px;
  font-size: 13px;
`;

const TreeFrame = styled.div`
  display: flex;
  flex: 1;
  flex-direction: column;
  min-height: 0;
  padding: 1px;
  background: #f4f4f4;
  border: 1px solid #606060;
`;

const TreeArea = styled.div`
  display: flex;
  flex: 1;
  min-height: 0;
`;

const TreeClip = styled.div`
  flex: 1;
  min-width: 0;
  overflow: hidden;
`;

const TreeTable = styled.table`
  width: 100%;
  table-layout: fixed;
  border-collapse: separate;
  border-spacing: 0;
  th {
    height: 19px;
    padding: 0 5px;
    text-align: left;
    font-weight: normal;
    background: linear-gradient(#f4f4f4, #d0d0d0);
    border-bottom: 1px solid #989898;
  }
  th:first-child { width: 200px; border-right: 1px solid #989898; }
  th svg { display: inline-block; margin-left: 16px; vertical-align: 2px; }
  td { height: 20px; padding: 0; border-bottom: 1px solid #dcdcdc; }
  td:first-child { border-right: 1px solid #d0d0d0; }
`;

const TreeRow = styled.tr<{ $alt: boolean; $on?: boolean }>`
  background: ${(p) => (p.$alt ? "#f2f2f2" : "#fff")};
  td:last-child { background: ${(p) => (p.$on ? "#3399fe" : "transparent")}; }
`;

const NameCell = styled.div`
  display: flex;
  align-items: center;
  height: 19px;
  white-space: nowrap;
`;

const Slot = styled.span`
  display: flex;
  flex: none;
  justify-content: center;
  width: 17px;
`;

const NodeText = styled.span<{ $on?: boolean }>`
  flex: 1;
  padding-left: 2px;
  line-height: 19px;
  color: ${(p) => (p.$on ? "#fff" : "#282828")};
  background: ${(p) => (p.$on ? "#3399fe" : "transparent")};
`;

const Check = styled.input`
  flex: none;
  appearance: none;
  width: 13px;
  height: 13px;
  margin: 0;
  border: 1px solid #000;
  background: #fff;
  &:checked {
    background: #fff url("data:image/svg+xml,%3Csvg xmlns='http://www.w3.org/2000/svg' viewBox='0 0 11 11'%3E%3Cpath d='M1.5 5l3 3.5L10 2' fill='none' stroke='%2310b818' stroke-width='2.4'/%3E%3C/svg%3E") center / 11px 11px;
  }
`;

const Gutter = styled.div`
  display: flex;
  flex: none;
  flex-direction: column;
  align-items: stretch;
  width: 16px;
  background: #ececec;
`;
const GutterHead = styled.span`
  height: 20px;
  background: linear-gradient(#f4f4f4, #d0d0d0);
  border-bottom: 1px solid #989898;
`;
const ArrowButton = styled.button`
  display: flex;
  flex: none;
  align-items: center;
  justify-content: center;
  width: 16px;
  height: 17px;
`;
const ThumbV = styled.span`
  height: 15px;
  margin-right: 1px;
  background: linear-gradient(90deg, #f0f0f0, #c8c8c8);
  border: 1px solid #8c8c8c;
`;
const Spring = styled.span`flex: 1;`;

const ScrollRow = styled.div`
  display: flex;
  flex: none;
  align-items: center;
  height: 17px;
  background: #ececec;
`;
const ThumbH = styled.span`
  display: flex;
  align-items: center;
  justify-content: center;
  flex: 234;
  height: 15px;
  background: linear-gradient(#e8e8e8, #bcbcbc);
  border: 1px solid #8c8c8c;
`;
const ThumbRest = styled.span`flex: 15;`;

const Splitter = styled.div`
  display: flex;
  align-items: center;
  gap: 4px;
  height: 12px;
  flex: none;
  &::before, &::after { content: ""; flex: 1; border-top: 1px solid #a0a0a0; }
`;
const SplitHandle = styled.span`
  width: 53px;
  height: 6px;
  background: #d0d0d0;
  border: 1px solid #989898;
`;

const FoldRow = styled.button`
  display: flex;
  flex: none;
  align-items: center;
  height: 23px;
  padding-left: 7px;
  text-align: left;
  font-weight: bold;
  background: linear-gradient(#f4f4f4, #cacaca);
  border-bottom: 1px solid #8c8c8c;
  border-right: 1px solid #8c8c8c;
  border-top: 1px solid #fff;
`;
const FoldName = styled.span`flex: 1;`;
const FoldArrow = styled.span`
  display: flex;
  align-items: center;
  justify-content: center;
  width: 23px;
  height: 20px;
  border-left: 1px solid #a0a0a0;
`;

type Node = { icons: string[]; text: string; child?: boolean; sign?: "+" | "-"; on?: boolean };
const nodes: Node[] = [
  { icons: ["clock"], text: "历史记录模式" },
  { icons: ["views"], text: "模型视图", sign: "+" },
  { icons: ["check", "camera"], text: "摄像机", sign: "+" },
  { icons: ["clock", "sheet"], text: "图纸", sign: "+" },
  { icons: ["folderEq"], text: "用户表达式", sign: "+" },
  { icons: ["folder"], text: "组", sign: "+" },
  { icons: ["folder"], text: "模型历史记录", sign: "-" },
  { icons: ["body"], text: "体 (0)", child: true, on: true },
  { icons: ["body"], text: "体 (1)", child: true },
  { icons: ["body"], text: "体 (2)", child: true },
  { icons: ["block"], text: "块 (3)", child: true },
  { icons: ["block"], text: "块 (4)", child: true },
  { icons: ["block"], text: "块 (5)", child: true },
  { icons: ["subtract"], text: "求差 (6)", child: true },
  { icons: ["subtract"], text: "求差 (7)", child: true },
  { icons: ["cylinder"], text: "圆柱 (8)", child: true },
  { icons: ["cylinder"], text: "圆柱 (9)", child: true },
  { icons: ["unite"], text: "求和 (10)", child: true },
];

function Branch({ node, first }: { node: Node; first: boolean }) {
  if (node.child) {
    return (
      <svg width="40" height="20" viewBox="0 0 40 20" aria-hidden="true">
        <path d="M28.5 0v20M29 10.5h10" stroke="#909090" strokeDasharray="1 1" />
      </svg>
    );
  }
  return (
    <svg width="18" height="20" viewBox="0 0 18 20" aria-hidden="true">
      <path d={`M8.5 ${first ? 10 : 0}V${node.sign === "-" ? 10 : 20}M9 10.5h9`} stroke="#909090" strokeDasharray="1 1" />
      {node.sign && (
        <>
          <path d="M4.5 6.5h8v8h-8Z" fill="#fff" stroke="#909090" />
          <path d={node.sign === "+" ? "M6 10.5h5M8.5 8v5" : "M6 10.5h5"} stroke="#202020" />
        </>
      )}
    </svg>
  );
}

/* ---------- model view ---------- */

const Viewport = styled.main`
  flex: 1;
  min-width: 0;
  overflow: hidden;
  background: #000;
  svg { width: 100%; height: 100%; }
  text { font-family: "Liberation Sans", sans-serif; }
`;

const Bolt = ({ x, y }: { x: number; y: number }) => (
  <g>
    <ellipse cx={x} cy={y} rx="13" ry="5.5" fill="#083808" stroke="#000" strokeWidth="1.5" />
    <ellipse cx={x} cy={y} rx="10" ry="4" fill="none" stroke="#18c018" strokeWidth="1.2" />
    <ellipse cx={x} cy={y} rx="7" ry="3" fill="#000" />
    <path d={`M${x - 4} ${y}l4-2 4 1-1 3h-6Z`} fill="#18d018" />
  </g>
);

const Coil = ({ x, y, w, h, n }: { x: number; y: number; w: number; h: number; n: number }) => (
  <g>
    <path d={`M${x} ${y}H${x + w}L${x + w + 1} ${y + h - 4}Q${x + w / 2} ${y + h + 5} ${x + 1} ${y + h}Z`} fill="#080858" stroke="#000" />
    {Array.from({ length: n }, (_, i) => (
      <path key={i} d={`M${x + 1} ${y + 3 + (i * h) / n}q${w / 2} 5 ${w - 1}-3`} fill="none" stroke="#3434e8" strokeWidth="2" />
    ))}
  </g>
);

const Model = () => (
  <svg viewBox="357 285 596 506" preserveAspectRatio="xMinYMin meet" role="img" aria-label="模架三维模型">
    <defs>
      <linearGradient id="bore" x1="0" x2="1" y1="0" y2="1"><stop offset="0" stopColor="#78a8d8" /><stop offset="1" stopColor="#e8f8ff" /></linearGradient>
      <linearGradient id="boreRed" x1="0" x2="1" y1="0" y2="1"><stop offset="0" stopColor="#c86060" /><stop offset="1" stopColor="#ffb8b0" /></linearGradient>
      <clipPath id="inner"><ellipse cx="605" cy="414" rx="41" ry="16" transform="rotate(-3 605 414)" /></clipPath>
    </defs>
    <g stroke="#000" strokeWidth="1.5" strokeLinejoin="round">
      <path d="M408 672l21-9 169 76-22 8Z" fill="#fff" />
      <path d="M576 747l66-25 139-51 43-16v-18l23 11-11 8Z" fill="#fff" />
      <path d="M408 672l168 75 2 25-169-75Z" fill="#acacac" />
      <path d="M576 747l271-99 1 24-270 100Z" fill="#d2d4d2" />
      <path d="M828 643l12 4-10 5M832 641l12 5M828 648h8" fill="none" strokeWidth="1" />
      <path d="M636 640l138-51 7 82-139 51Z" fill="#fff" />
      <path d="M755 597l19-8 2 43-19-9Z" fill="#acacac" strokeWidth="1" />
      <path d="M757 623l18 8-20 6 8-7Z" fill="#202020" />
    </g>
    <Coil x={722} y={598} w={34} h={34} n={8} />
    <Coil x={637} y={634} w={19} h={33} n={8} />
    <ellipse cx="760" cy="631" rx="5" ry="2" fill="#2828d8" stroke="#000" />
    <ellipse cx="643" cy="674" rx="4" ry="2" fill="#2828d8" stroke="#000" />
    <g stroke="#000" strokeWidth="1.5" strokeLinejoin="round">
      <path d="M641 680l134-49 1 15-134 50Z" fill="#b0b8cc" />
      <path d="M642 696l134-50 2 22-134 49Z" fill="#d8b8c8" />
      <path d="M641 680l2 42" strokeWidth="3" />
      <path d="M774 589l42-16 8 82-43 16Z" fill="#d2d4d2" />
      <path d="M776 632l3 38" strokeWidth="4" />
      <path d="M422 581l170 75 6 83-169-76Z" fill="#b0b0b0" />
      <path d="M592 656l44-16 6 82-44 17Z" fill="#d2d4d2" />
      <path d="M417 517l170 76 5 63-170-75Z" fill="#b86060" />
      <path d="M587 593l224-83 5 63-224 83Z" fill="#d87878" />
      <path d="M413 474l168 59 6 60-170-76Z" fill="#6080b4" />
      <path d="M581 528l224-84 6 66-224 83Z" fill="#78aadc" />
      <path d="M417 517l170 76 224-83" fill="none" strokeWidth="3" />
      <path d="M387 437l170 76v26l-169-77Z" fill="#b4b0b4" />
      <path d="M557 513l268-100 2 25-270 101Z" fill="#d2d4d2" />
      <path d="M387 437l269-100 169 76-268 100Z" fill="#fff" />
      <ellipse cx="696" cy="519" rx="7.5" ry="9" fill="url(#bore)" transform="rotate(15 696 519)" />
      <ellipse cx="701" cy="583" rx="7.5" ry="9" fill="url(#boreRed)" transform="rotate(15 701 583)" />
    </g>
    <Bolt x={659} y={374} /><Bolt x={733} y={407} /><Bolt x={478} y={441} /><Bolt x={552} y={474} />
    <g stroke="#000" strokeWidth="1.5">
      <path d="M548 417v10c8 27 106 27 114-10v-6Z" fill="#108068" />
      <ellipse cx="605" cy="415" rx="57" ry="23.5" fill="#18b890" transform="rotate(-3 605 415)" strokeWidth="2" />
      <ellipse cx="605" cy="414" rx="41" ry="16" fill="#107c64" transform="rotate(-3 605 414)" strokeWidth="2.5" />
      <g clipPath="url(#inner)"><ellipse cx="606" cy="429" rx="42" ry="16" fill="#fff" transform="rotate(-3 606 429)" /></g>
      <path d="M638 401l9-4 4 2-9 3ZM560 429l9-5 5 4-9 3Z" fill="#203020" />
    </g>
    <text x="580" y="494" fontSize="13" fill="#309048">YC</text>
    <text x="642" y="492" fontSize="13" fill="#e04050">XC</text>
    <text x="613" y="460" fontSize="14" fill="#1450f0">ZC</text>
    <g fill="none" stroke="#ff9c40" strokeLinejoin="round" strokeLinecap="round">
      <path d="M566 512l52-19 46 15-56 19Z" fill="#d4d6d4" strokeWidth="5" />
      <path d="M550 509l72-26 54 26-72 27Z" strokeWidth="8" />
      <path d="M584 503l34 19M610 490l44 20M602 523l58-19" strokeWidth="6" />
      <path d="M560 505l60-20" strokeWidth="8" />
    </g>
    <path d="M558 507l13-5M613 487l8-3" fill="none" stroke="#fff" strokeWidth="2" />
    <path d="M629 490l24 11M609 532l52-18M562 517l28 11" fill="none" stroke="#e8e4e0" strokeWidth="1.2" />
    <path d="M611 511l-24-9 6-2Z" fill="#389858" />
    <path d="M614 511l28-9" stroke="#e89090" strokeWidth="2" />
    <path d="M609 460l-3 16 4 2 3 33 0-33 1-4Z" fill="#5068c0" />
    <path d="M373 378l6 1-4 2ZM873 404l6 1-4 2Z" fill="#b07030" stroke="#905820" />
    <path d="M389 723l13-7 14 6v20l-14 3-13-4Z" fill="#909090" />
    <path d="M389 723l13 5 14-6M402 728v16" stroke="#b4b4b4" fill="none" />
    <path d="M402 743l-2-21" stroke="#1048e0" strokeWidth="2.5" />
    <path d="M400 716l-3 8h6Z" fill="#1048e0" />
    <path d="M402 743l16-6" stroke="#d03030" strokeWidth="2" /><path d="M427 734l-10 1 2 4Z" fill="#d03030" />
    <path d="M402 743l-12-5" stroke="#289040" strokeWidth="2" /><path d="M383 734l5 5 3-4Z" fill="#289040" />
    <circle cx="402" cy="743" r="4.5" fill="#d8d8d8" />
    <text x="395" y="716" fontSize="13" fill="#1048e0">Z</text>
    <text x="426" y="738" fontSize="12" fill="#d83030">X</text>
    <text x="377" y="739" fontSize="12" fill="#289040">Y</text>
  </svg>
);

const BottomBar = styled(Bar)`
  height: 36px;
  padding-left: 148px;
  background: linear-gradient(#e8e8e8, #ccceca);
`;
const Floor = styled.div`
  flex: none;
  height: 4px;
  background: #201820;
`;

const tabs: { n: string; t: string; gap: number; on?: boolean }[] = [
  { n: "tabAsm", t: "装配导航器", gap: 0 }, { n: "tabCon", t: "约束导航器", gap: 2 },
  { n: "tabPart", t: "部件导航器", gap: 1, on: true }, { n: "tabLib", t: "重用库", gap: 1 },
  { n: "tabInfo", t: "HD3D 工具", gap: 14 }, { n: "tabWeb", t: "Web 浏览器", gap: 14 },
  { n: "clock", t: "历史记录", gap: 14 }, { n: "tabRole", t: "角色", gap: 2 }, { n: "tabVis", t: "系统可视化", gap: 2 },
];
const steps = ["M1 1h7M1 7h7L4.5 3Z", "M1 7h7L4.5 3Z", "M1 2h7L4.5 6Z", "M1 1h7L4.5 5ZM1 7h7"];

export default function App() {
  return (
    <Page>
      <Global />
      <MenuBar>
        <Brand><Grip /><Icon n="logo" size={16} /></Brand>
        {menus.map(([name, key]) => (
          <button key={name}>{name}{key && <>(<u>{key}</u>)</>}</button>
        ))}
      </MenuBar>

      <Bar>
        <Grip />
        <TextButton><Icon n="globe" />开始</TextButton><Drop />
        <Tool n="file" t="新建" size={24} /><Tool n="open" t="打开" /><Tool n="save" t="保存" size={20} /><Sep />
        <Tool n="cut" t="剪切" /><Tool n="copy" t="复制" size={24} /><Tool n="paste" t="粘贴" size={22} /><Tool n="del" t="删除" size={22} /><Sep />
        <Tool n="undo" t="撤消" size={22} /><Tool n="redo" t="重做" size={22} /><Sep />
        <TextButton><Icon n="binoc" />命令查找器</TextButton>
        <Tool n="star" t="重复命令" /><Drop /><More /><Sep /><Grip />
        <Tool n="fit" t="适合窗口" size={24} /><Drop /><Tool n="laptop" t="定向视图" size={24} /><Drop />
        <Tool n="cube" t="渲染样式" /><Drop /><Tool n="blank" t="背景" /><Drop /><Sep />
        <Tool n="clipIn" t="编辑截面" /><Tool n="clipOut" t="剪切截面" /><More /><Sep /><Grip />
        <Tool n="palette" t="编辑对象显示" /><Sep /><Tool n="eye" t="显示和隐藏" /><Drop /><Sep />
        <Tool n="measure" t="测量距离" /><Drop /><Tool n="ruler" t="简单测量" />
      </Bar>

      <Bar $tall $tone="linear-gradient(#dedede, #cecfce)">
        <Grip />
        <Big n="plane" t="基准平面" /><Drop /><Big n="extrude" t="拉伸" /><Drop />
        <Big n="hole" t="孔" /><Big n="thread" t="螺纹" /><Sep />
        <Big n="pattern" t="阵列特征" /><Drop /><Big n="unite" t="求和" /><Drop />
        <Big n="trim" t="修剪体" /><Drop /><Big n="shell" t="抽壳" /><Sep />
        <Big n="blend" t="边倒圆" /><Drop /><Big n="draft" t="拔模" /><More /><Sep /><Grip />
        <CutButton><Icon n="offset" />偏置</CutButton>
      </Bar>

      <Bar $tone="linear-gradient(#d8d8d8, #cccecc)">
        <Grip />
        <Tool n="bounds" t="设置边界" size={22} /><Tool n="layers" t="图层" /><Tool n="layerset" t="图层设置" /><Sep />
        <Tool n="tag" t="标签" /><Sep />
        <Tool n="partTick" t="检查部件" /><Tool n="sketchTick" t="检查草图" /><Tool n="asmTick" t="检查装配" /><Sep />
        <Tool n="abc" t="属性" /><More /><Sep /><Grip />
        <Tool n="surf1" t="曲面" /><Tool n="surf2" t="扫掠" /><Tool n="suppress" t="抑制" /><More /><Sep /><Grip />
        <Tool n="spring" t="圆柱压缩弹簧" size={22} /><Tool n="tension" t="圆柱拉伸弹簧" /><Tool n="disc" t="碟簧" size={22} /><Sep />
        <Tool n="delSpring" t="删除弹簧" /><More /><Room $w={96} /><Sep /><Grip />
        <Tool n="triangle" t="三角" size={24} /><Tool n="tableTri" t="表格" /><Tool n="folderPts" t="点组" /><Tool n="folderCir" t="圆组" /><More />
        <Room $w={32} /><Sep /><Grip />
        <Tool n="lockCube" t="锁定" /><Tool n="lockCube" t="解锁" /><More /><Room $w={1} />
      </Bar>

      <Bar $tall $tone="#cbcdcb">
        <Grip />
        <Tool n="filterTick" t="选择过滤" /><Tool n="filterTree" t="过滤树" /><Tool n="filterTable" t="过滤表" /><Tool n="csys" t="坐标系" />
        <More /><Room $w={102} /><Sep /><Grip />
        <Big n="sphere" t="真实着色" />
        <Big n="metal" t="光亮金属刷色" dim /><Drop />
        <Big n="plastic" t="红色高泽塑料" dim /><Drop />
        <Big n="reflect" t="无全局反射图" dim /><Drop />
        <Big n="gradient" t="渐变深灰色背景" dim /><Drop />
        <Big n="shadow" t="显示阴影" on />
        <Big n="floorRef" t="显示地板反射" dim /><Big n="floorGrid" t="显示地板栅格" dim />
      </Bar>

      <SelectionBar>
        <Choice w={143} t="没有选择过滤器" label="选择过滤器" />
        <Choice w={151} t="整个装配" label="选择范围" />
        <Snap n="chainG" t="链选择" /><ShortSep />
        <Snap n="magG" t="常规选择" /><Snap n="target" t="取消选择" /><Snap n="binocTree" t="查找" /><ShortSep />
        <Snap n="smallBox" t="隐藏边" /><Snap n="tealCube" t="着色" /><ShortSep />
        <Snap n="lineEnd" t="端点" on /><Snap n="lineMid" t="中点" on /><Snap n="curvePt" t="控制点" /><Snap n="cross" t="交点" />
        <Snap n="circCen" t="圆弧中心" on /><Snap n="circQuad" t="象限点" /><Snap n="plusPt" t="现有点" on /><Snap n="onCurve" t="曲线上的点" on />
        <Snap n="onFace" t="面上的点" /><ShortSep /><Snap n="gridPt" t="栅格点" />
      </SelectionBar>
      <StatusLine><Prompt /><Status>体(0) 已选定</Status></StatusLine>

      <Workspace>
        <Rail>
          {tabs.map((tab) => (
            <RailTab key={tab.t} $on={tab.on} $gap={tab.gap} aria-label={tab.t} title={tab.t}><Icon n={tab.n} size={23} /></RailTab>
          ))}
          <Wave width="28" height="8" viewBox="0 0 28 8"><path d="M0 3c8 6 12-2 28 0" fill="none" stroke="#606060" strokeWidth="1.5" /></Wave>
          {steps.map((d, i) => (
            <RailStep key={d} aria-label={`滚动 ${i + 1}`}>
              <svg width="9" height="8" viewBox="0 0 9 8"><path d={d} fill={i < 2 ? "#a0a0a0" : "#303030"} stroke={i < 2 ? "#a0a0a0" : "#303030"} /></svg>
            </RailStep>
          ))}
        </Rail>

        <Navigator>
          <PanelTitle>
            <svg width="13" height="12" viewBox="0 0 13 12" aria-hidden="true">
              <path d="M4 2l3-1 4 3-1 4-4 2-4-3Z" fill="#e8d840" stroke="#000" strokeWidth="1.5" /><path d="M3 8l-2 3M6 4l3 2" stroke="#000" />
            </svg>
            部件导航器
          </PanelTitle>
          <TreeFrame>
            <TreeArea>
              <TreeClip>
                <TreeTable>
                  <thead>
                    <tr>
                      <th>名称<svg width="11" height="6" viewBox="0 0 11 6" aria-hidden="true"><path d="M0 6L5.5 0 11 6Z" /></svg></th>
                      <th>附注</th>
                    </tr>
                  </thead>
                  <tbody>
                    {nodes.map((node, i) => (
                      <TreeRow key={node.text} $alt={i % 2 === 1} $on={node.on}>
                        <td>
                          <NameCell>
                            <Branch node={node} first={i === 0} />
                            {node.child && <Check type="checkbox" defaultChecked aria-label={node.text} />}
                            {node.icons.map((n) => <Slot key={n}><Icon n={n} size={16} /></Slot>)}
                            <NodeText $on={node.on}>{node.text}</NodeText>
                          </NameCell>
                        </td>
                        <td />
                      </TreeRow>
                    ))}
                  </tbody>
                </TreeTable>
              </TreeClip>
              <Gutter>
                <GutterHead />
                <ArrowButton aria-label="向上"><svg width="7" height="4" viewBox="0 0 7 4"><path d="M0 4L3.5 0 7 4Z" /></svg></ArrowButton>
                <ThumbV /><Spring />
                <ArrowButton aria-label="向下"><Caret /></ArrowButton>
              </Gutter>
            </TreeArea>
            <ScrollRow>
              <ArrowButton aria-label="向左"><svg width="4" height="7" viewBox="0 0 4 7"><path d="M4 0L0 3.5 4 7Z" /></svg></ArrowButton>
              <ThumbH><svg width="9" height="6" viewBox="0 0 9 6"><path d="M1 0v6M4.5 0v6M8 0v6" stroke="#505050" /></svg></ThumbH>
              <ThumbRest />
              <ArrowButton aria-label="向右"><svg width="4" height="7" viewBox="0 0 4 7"><path d="M0 0L4 3.5 0 7Z" /></svg></ArrowButton>
              <Gutter />
            </ScrollRow>
          </TreeFrame>
          <Splitter><SplitHandle /></Splitter>
          {["相依性", "细节", "预览"].map((t) => (
            <FoldRow key={t}>
              <FoldName>{t}</FoldName>
              <FoldArrow><svg width="12" height="10" viewBox="0 0 12 10"><path d="M1 0l5 8 5-8" fill="none" stroke="#606060" strokeWidth="2.6" /></svg></FoldArrow>
            </FoldRow>
          ))}
        </Navigator>

        <Viewport><Model /></Viewport>
      </Workspace>

      <BottomBar>
        <Sep /><Grip />
        <Tool n="sketchNew" t="草图" /><TextButton $dim disabled><Icon n="finish" />完成草图</TextButton>
        <Tool n="profile" t="轮廓" size={24} /><Tool n="line" t="直线" size={24} /><Tool n="arc" t="圆弧" /><Tool n="circle" t="圆" />
        <Tool n="fillet" t="圆角" size={22} /><Tool n="chamfer" t="倒斜角" size={22} /><Tool n="rect" t="矩形" /><Tool n="spline" t="艺术样条" />
        <Tool n="plus" t="点" /><Tool n="contour" t="偏置曲线" /><Drop /><Sep />
        <Tool n="trimQ" t="快速修剪" /><Tool n="extQ" t="快速延伸" /><Sep />
        <Tool n="dimQ" t="快速尺寸" /><Drop /><Sep />
        <Tool n="constr" t="几何约束" /><Tool n="constrGo" t="自动约束" /><Drop /><More /><Room $w={2} />
      </BottomBar>
      <Floor />
    </Page>
  );
}
